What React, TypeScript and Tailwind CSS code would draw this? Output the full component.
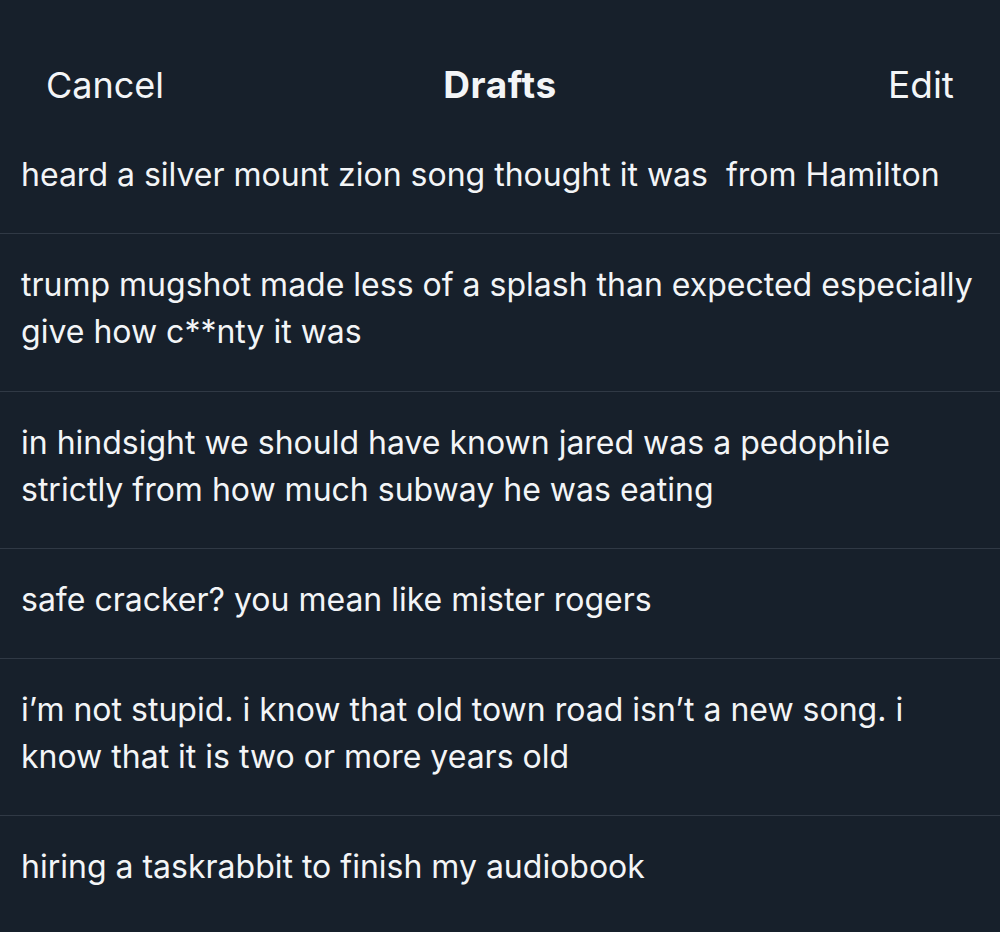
import React from "react";

const drafts = [
  "heard a silver mount zion song thought it was\u00a0 from Hamilton",
  "trump mugshot made less of a splash than expected especially give how c**nty it was",
  "in hindsight we should have known jared was a pedophile strictly from how much subway he was eating",
  "safe cracker? you mean like mister rogers",
  "i\u2019m not stupid. i know that old town road isn\u2019t a new song. i know that it is two or more years old",
  "hiring a taskrabbit to finish my audiobook",
];

export default function App() {
  return (
    <div
      className="w-[1000px] h-[932px] overflow-hidden bg-[#17202b] text-[#f3f5f7]"
      style={{ fontFamily: "Inter, 'Open Sans', sans-serif" }}
    >
      <div className="h-[124px] grid grid-cols-3 items-start px-[46px] pt-[61px]">
        <span className="text-[36px] leading-[48px] justify-self-start">Cancel</span>
        <span className="text-[37px] leading-[48px] font-bold justify-self-center tracking-[0.6px]">Drafts</span>
        <span className="text-[37px] leading-[48px] justify-self-end">Edit</span>
      </div>
      {drafts.map((d, i) => (
        <div
          key={i}
          className={`px-[21px] pt-[27px] ${i === 1 ? "pb-[36px]" : "pb-[35px]"} ${i < drafts.length - 1 ? "border-b border-[#303945]" : ""}`}
        >
          <p className="text-[32px] leading-[47px]">{d}</p>
        </div>
      ))}
    </div>
  );
}
